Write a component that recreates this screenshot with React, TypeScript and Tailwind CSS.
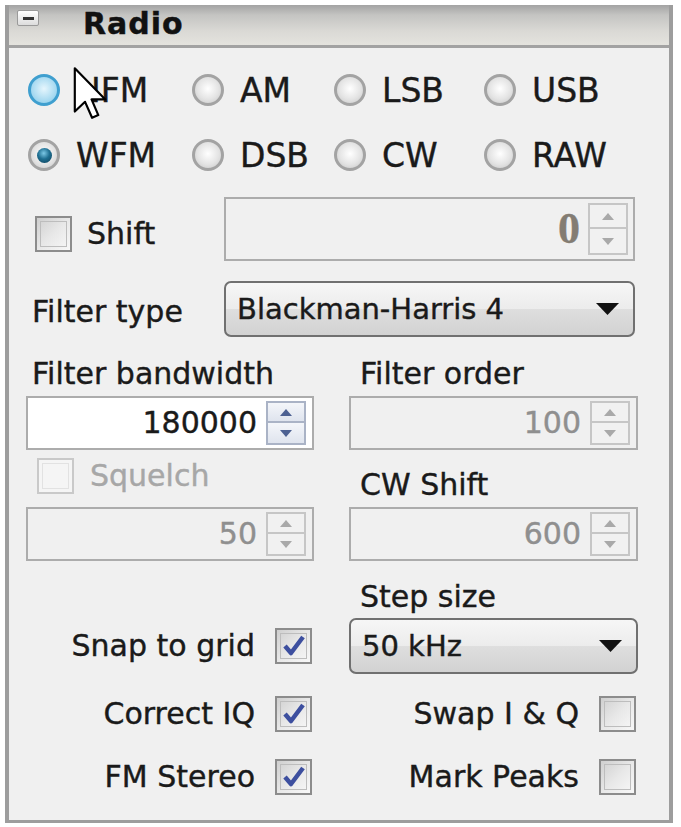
import React from "react";

type RState = "off" | "on" | "hover";

function Radio({ label, state }: { label: string; state: RState }) {
  const ring =
    state === "hover"
      ? "border-[#3f9fcf] bg-[radial-gradient(circle_at_50%_45%,#e6f6fd_0%,#9fd6ef_70%,#6fbfe2_100%)]"
      : "border-[#a3a3a3] bg-[radial-gradient(circle_at_50%_45%,#ffffff_0%,#e4e4e4_55%,#c4c4c4_100%)]";
  return (
    <div className="flex items-center gap-[16px] h-[40px]">
      <span className={`relative flex items-center justify-center w-[32px] h-[32px] rounded-full border-[3px] ${ring}`}>
        {state === "on" && (
          <span className="w-[15px] h-[15px] rounded-full bg-[radial-gradient(circle_at_45%_35%,#7cc8e6_0%,#1f6f92_45%,#0b3b52_100%)]" />
        )}
      </span>
      <span className="text-[33px] leading-none text-[#1a1a1a]">{label}</span>
    </div>
  );
}

function Check({ checked = false, disabled = false }: { checked?: boolean; disabled?: boolean }) {
  return (
    <span
      className={`relative flex items-center justify-center w-[37px] h-[36px] border-2 shrink-0 ${
        disabled
          ? "border-[#c9c9c9] bg-[#f5f5f5]"
          : "border-[#8c8c8c] bg-[linear-gradient(135deg,#cfcfcf_0%,#e8e8e8_50%,#f8f8f8_100%)]"
      }`}
    >
      <span
        className={`absolute inset-[3px] border ${
          disabled ? "border-[#e2e2e2]" : "border-[#bdbdbd]"
        }`}
      />
      {checked && (
        <svg width="28" height="28" viewBox="0 0 28 28" className="relative">
          <path d="M5 14 L11 21 L23 5" fill="none" stroke="#3d4f9f" strokeWidth="4.5" strokeLinejoin="round" />
        </svg>
      )}
    </span>
  );
}

function Arrow({ up, color }: { up: boolean; color: string }) {
  return (
    <svg width="12" height="7" viewBox="0 0 12 7">
      {up ? <path d="M0 7 L6 0 L12 7 Z" fill={color} /> : <path d="M0 0 L6 7 L12 0 Z" fill={color} />}
    </svg>
  );
}

function Spinner({ enabled, h }: { enabled: boolean; h: number }) {
  const color = enabled ? "#4d6192" : "#a9a9a9";
  const half = h === 52 ? "h-[26px]" : "h-[22px]";
  const btn = enabled
    ? "border-[#aab3c6] bg-[linear-gradient(to_bottom,#f4f6fa,#dfe4ee)]"
    : "border-[#c6c6c6] bg-[#f1f1f1]";
  return (
    <div className="flex flex-col w-[40px] shrink-0">
      <div className={`${half} border-2 ${btn} flex items-center justify-center`}>
        <Arrow up color={color} />
      </div>
      <div className={`${half} border-2 border-t-0 ${btn} flex items-center justify-center`}>
        <Arrow up={false} color={color} />
      </div>
    </div>
  );
}

function Numeric({ value, enabled, w }: { value: string; enabled: boolean; w: string }) {
  return (
    <div
      className={`${w} h-[54px] border-2 border-[#acacac] flex items-center justify-end pr-[6px] gap-[9px] ${
        enabled ? "bg-white" : "bg-[#f0f0f0]"
      }`}
    >
      <span className={`text-[30px] leading-none ${enabled ? "text-[#1a1a1a]" : "text-[#8f8f8f]"}`}>{value}</span>
      <Spinner enabled={enabled} h={44} />
    </div>
  );
}

function Dropdown({ value, w }: { value: string; w: string }) {
  return (
    <div
      className={`${w} h-[56px] rounded-[7px] border-2 border-[#707070] bg-[linear-gradient(to_bottom,#f6f6f6_0%,#ececec_50%,#dedede_51%,#d2d2d2_100%)] flex items-center pl-[11px] pr-[14px]`}
    >
      <span className="text-[29px] leading-none text-[#1a1a1a] flex-1">{value}</span>
      <svg width="23" height="12" viewBox="0 0 23 12">
        <path d="M0 0 L23 0 L11.5 12 Z" fill="#111" />
      </svg>
    </div>
  );
}

function CheckLabel({ label, checked }: { label: string; checked?: boolean }) {
  return (
    <div className="flex items-center justify-end gap-[20px] pr-[2px]">
      <span className="text-[30px] leading-none text-[#1a1a1a]">{label}</span>
      <Check checked={checked} />
    </div>
  );
}

export default function App() {
  return (
    <div className="w-[681px] h-[827px] bg-white pt-[5px] pl-[5px] font-['DejaVu_Sans',sans-serif] [-webkit-text-stroke:0.4px_currentColor] overflow-hidden">
      <div className="relative w-[668px] h-[818px] border-x-[4px] border-b-[3px] border-[#9d9d9d] bg-[#f0f0f0] flex flex-col">
        {/* header */}
        <div className="h-[43px] shrink-0 border-b-[3px] border-[#a2a2a2] bg-[linear-gradient(to_bottom,#a3a3a3_0%,#c4c4c2_25%,#dad9d5_65%,#e4e3de_100%)] flex items-center">
          <span className="ml-[8px] mt-[-14px] w-[22px] h-[16px] rounded-[2px] border border-[#9a9a9a] bg-[linear-gradient(to_bottom,#ffffff,#dcdcdc)] flex items-center justify-center">
            <span className="w-[11px] h-[3px] bg-[#333]" />
          </span>
          <span className="ml-[44px] mt-[-2px] text-[30px] font-bold tracking-[1px] leading-none text-[#111]">Radio</span>
        </div>

        {/* radios */}
        <div className="pl-[19px] mt-[22px] grid grid-cols-[164px_142px_150px_1fr] gap-y-[25px]">
          <Radio label="NFM" state="hover" />
          <Radio label="AM" state="off" />
          <Radio label="LSB" state="off" />
          <Radio label="USB" state="off" />
          <Radio label="WFM" state="on" />
          <Radio label="DSB" state="off" />
          <Radio label="CW" state="off" />
          <Radio label="RAW" state="off" />
        </div>

        {/* shift */}
        <div className="mt-[22px] h-[64px] flex justify-between pr-[34px]">
          <div className="flex items-center gap-[15px] pl-[26px] self-start mt-[19px]">
            <Check />
            <span className="text-[30px] leading-none text-[#1a1a1a]">Shift</span>
          </div>
          <div className="w-[411px] h-[64px] border-2 border-[#acacac] bg-[#f0f0f0] flex items-center justify-end pr-[5px] gap-[8px]">
            <span className="font-['Liberation_Serif',serif] font-bold text-[44px] leading-none text-[#837c73]">0</span>
            <Spinner enabled={false} h={52} />
          </div>
        </div>

        {/* filter type */}
        <div className="mt-[20px] h-[56px] flex items-center justify-between pl-[23px] pr-[34px]">
          <span className="text-[30px] leading-none text-[#1a1a1a] mt-[6px]">Filter type</span>
          <Dropdown value="Blackman-Harris 4" w="w-[411px]" />
        </div>

        {/* two columns */}
        <div className="pl-[17px] flex gap-[35px]">
          <div className="w-[288px] flex flex-col">
            <div className="mt-[18px] h-[36px] flex items-center pl-[6px] text-[30px] text-[#1a1a1a]">Filter bandwidth</div>
            <div className="mt-[5px]">
              <Numeric value="180000" enabled w="w-[288px]" />
            </div>
            <div className="mt-[6px] h-[46px] flex items-start">
              <div className="ml-[11px] mt-[2px] flex items-center gap-[16px]">
                <Check disabled />
                <span className="text-[30px] leading-none text-[#a7a7a7]">Squelch</span>
              </div>
            </div>
            <div className="mt-[5px]">
              <Numeric value="50" enabled={false} w="w-[288px]" />
            </div>
            <div className="mt-[17px] h-[36px]" />
            <div className="mt-[4px] h-[56px] flex items-center justify-end">
              <CheckLabel label="Snap to grid" checked />
            </div>
            <div className="mt-[22px] h-[36px]">
              <CheckLabel label="Correct IQ" checked />
            </div>
            <div className="mt-[27px] h-[36px]">
              <CheckLabel label="FM Stereo" checked />
            </div>
          </div>
          <div className="w-[289px] flex flex-col">
            <div className="mt-[18px] h-[36px] flex items-center pl-[11px] text-[30px] text-[#1a1a1a]">Filter order</div>
            <div className="mt-[5px]">
              <Numeric value="100" enabled={false} w="w-[289px]" />
            </div>
            <div className="mt-[6px] h-[46px] flex items-end">
              <div className="h-[36px] flex items-center pl-[11px] text-[30px] text-[#1a1a1a]">CW Shift</div>
            </div>
            <div className="mt-[5px]">
              <Numeric value="600" enabled={false} w="w-[289px]" />
            </div>
            <div className="mt-[17px] h-[36px] flex items-center pl-[11px] text-[30px] text-[#1a1a1a]">Step size</div>
            <div className="mt-[4px]">
              <Dropdown value="50 kHz" w="w-[289px]" />
            </div>
            <div className="mt-[22px] h-[36px]">
              <CheckLabel label="Swap I & Q" />
            </div>
            <div className="mt-[27px] h-[36px]">
              <CheckLabel label="Mark Peaks" />
            </div>
          </div>
        </div>

        {/* mouse cursor overlay */}
        <svg
          className="absolute left-[64px] top-[62px]"
          width="36"
          height="54"
          viewBox="0 0 13 20"
        >
          <path
            d="M0.5 0.5 L0.5 16.5 L4.3 12.9 L6.9 18.8 L9.2 17.8 L6.7 12 L11.8 12 Z"
            fill="#ffffff"
            stroke="#000"
            strokeWidth="0.8"
            strokeLinejoin="round"
          />
        </svg>
      </div>
    </div>
  );
}
